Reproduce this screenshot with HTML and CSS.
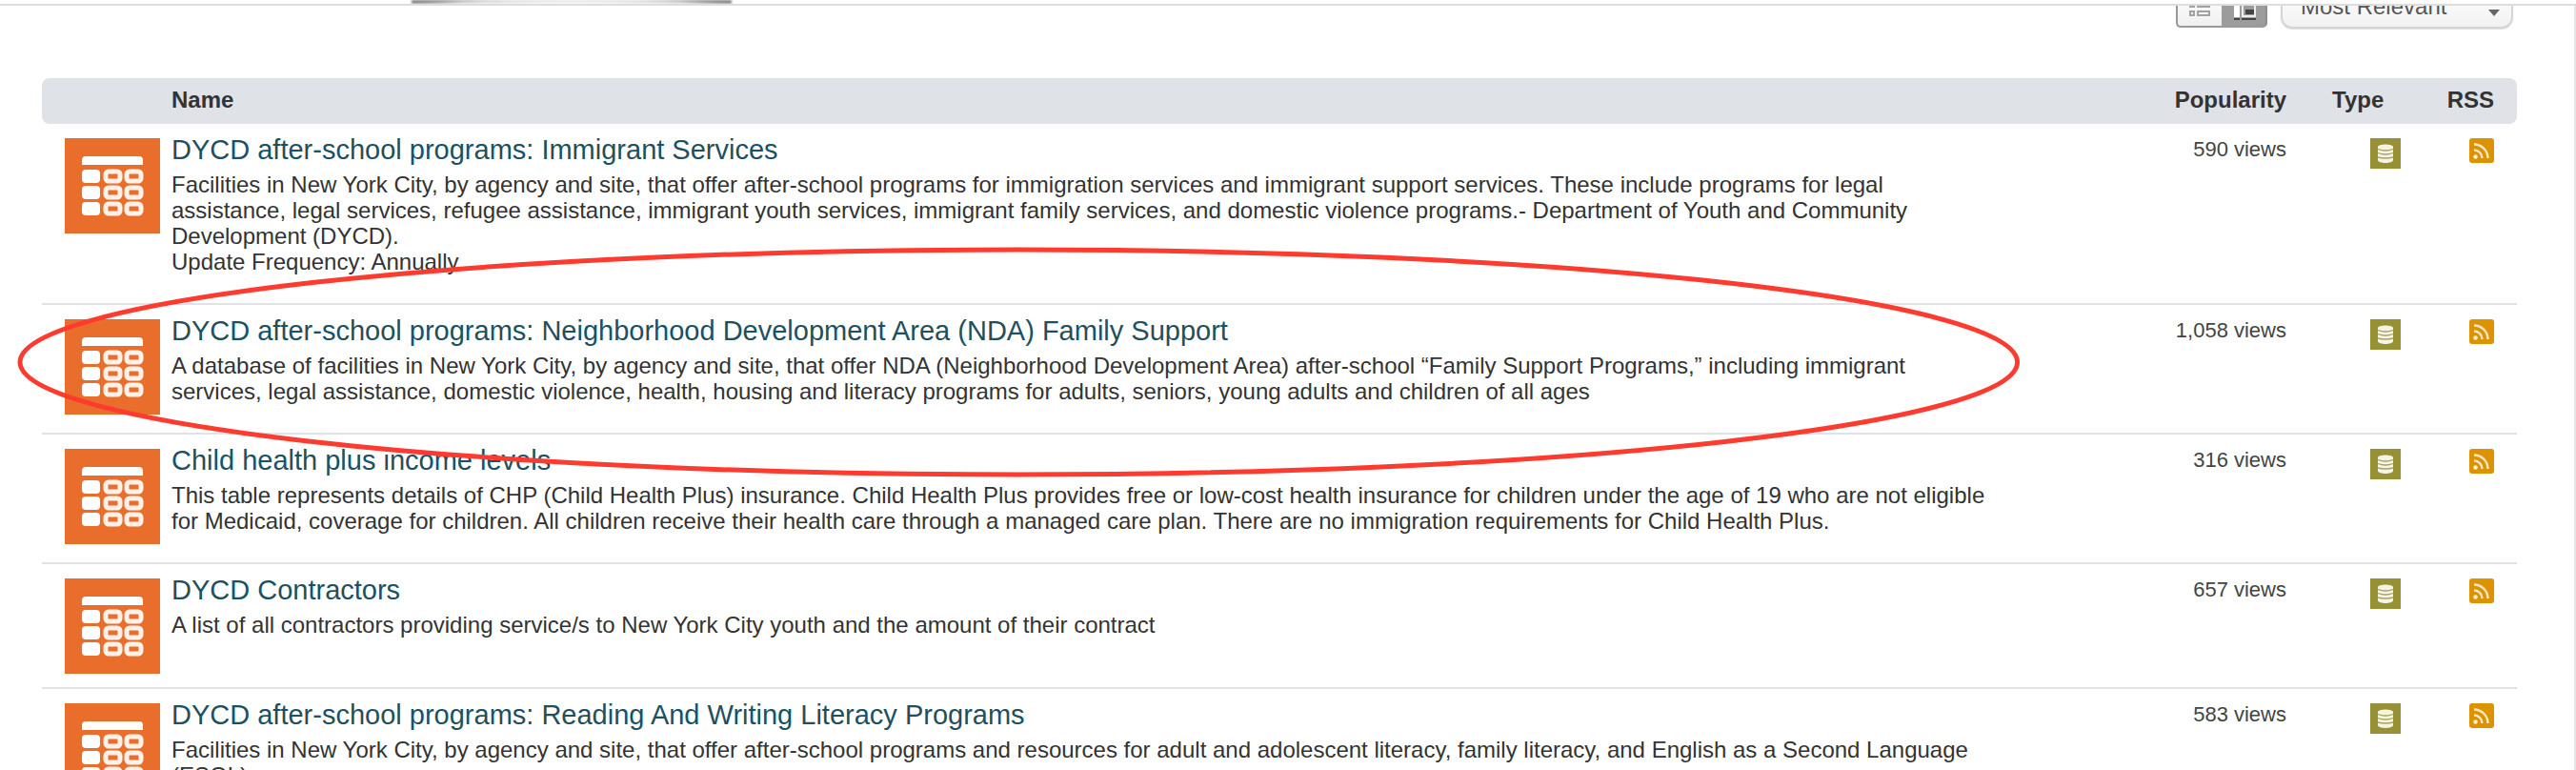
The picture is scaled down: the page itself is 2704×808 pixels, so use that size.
FILE: index.html
```
<!DOCTYPE html>
<html lang="en">
<head>
<meta charset="utf-8">
<title>Search results</title>
<link rel="stylesheet" href="styles.css">
</head>
<body>
<svg class="sprites" aria-hidden="true">
  <symbol id="dataset" viewBox="0 0 100 100">
    <path d="M18 28v-5q0-4 4-4h56q4 0 4 4v5z" fill="#fff"/>
    <g fill="#fff"><rect x="18" y="33" width="19" height="14" rx="4"/><rect x="18" y="50" width="19" height="14" rx="4"/><rect x="18" y="67" width="19" height="14" rx="4"/></g>
    <g fill="none" stroke="#fdf1ea" stroke-width="5"><rect x="43" y="35" width="15" height="10" rx="3"/><rect x="65" y="35" width="15" height="10" rx="3"/><rect x="43" y="52" width="15" height="10" rx="3"/><rect x="65" y="52" width="15" height="10" rx="3"/><rect x="43" y="69" width="15" height="10" rx="3"/><rect x="65" y="69" width="15" height="10" rx="3"/></g>
  </symbol>
  <symbol id="database" viewBox="0 0 32 32">
    <path d="M8 9v14c0 4 16 4 16 0V9z" fill="#f4f3e4"/>
    <ellipse cx="16" cy="9" rx="8" ry="2.5" fill="#f4f3e4"/>
    <path d="M8 11.500q8 3 16 0M8 15.500q8 3 16 0M8 20q8 2 16 0" fill="none" stroke="#a9a55a" stroke-width="1.300"/>
  </symbol>
  <symbol id="feed" viewBox="0 0 26 26">
    <circle cx="6.500" cy="19.500" r="2.200" fill="#fff3dc"/>
    <path d="M5 12.500a8.500 8.500 0 0 1 8.500 8.500M5 6.500a14.500 14.500 0 0 1 14.500 14.500" fill="none" stroke="#fbe9c8" stroke-width="2.400"/>
  </symbol>
</svg>
<header class="masthead"><div class="masthead-shadow"></div></header>
<main class="results">
  <div class="toolbar">
    <div class="views">
      <button class="view" aria-label="List view"><svg viewBox="0 0 48 44"><g fill="none" stroke="#a2a2a2" stroke-width="2"><path d="M15 18h4v4h-4zM23 18h12v4H23zM15 27h4v4h-4zM23 27h12v4H23z"/></g></svg></button>
      <button class="view view-on" aria-label="Detail view"><svg viewBox="0 0 48 44"><path d="M13 12h6v21h-6z" fill="#fff"/><path d="M22 13h13v19H22z" fill="none" stroke="#eee" stroke-width="2"/><path d="M25 25h9v5h-9zM13 34h6v2h-6zM21 34h15v2H21z" fill="#444"/></svg></button>
    </div>
    <div class="sort">
      <select class="sort-select" aria-label="Sort by"><option>Most Relevant</option></select>
      <svg class="sort-arrows" viewBox="0 0 12 20" aria-hidden="true"><path d="M0 8l6-8 6 8zM0 12h12l-6 7z" fill="#666"/></svg>
    </div>
  </div>
  <div class="listing">
    <table class="datasets">
      <thead>
        <tr><th class="thumb"></th><th class="name">Name</th><th class="views-count">Popularity</th><th class="type">Type</th><th class="rss">RSS</th></tr>
      </thead>
      <tbody>
        <tr>
          <td class="thumb"><svg class="dataset-icon"><use href="#dataset"/></svg></td>
          <td class="name"><a class="title" href="#">DYCD after-school programs: Immigrant Services</a><p class="about">Facilities in New York City, by agency and site, that offer after-school programs for immigration services and immigrant support services. These include programs for legal assistance, legal services, refugee assistance, immigrant youth services, immigrant family services, and domestic violence programs.- Department of Youth and Community Development (DYCD).<br>Update Frequency: Annually</p></td>
          <td class="views-count">590 views</td>
          <td class="type"><svg class="type-icon"><use href="#database"/></svg></td>
          <td class="rss"><a class="feed" href="#" aria-label="RSS feed"><svg class="feed-icon"><use href="#feed"/></svg></a></td>
        </tr>
        <tr>
          <td class="thumb"><svg class="dataset-icon"><use href="#dataset"/></svg></td>
          <td class="name"><a class="title" href="#">DYCD after-school programs: Neighborhood Development Area (NDA) Family Support</a><p class="about">A database of facilities in New York City, by agency and site, that offer NDA (Neighborhood Development Area) after-school “Family Support Programs,” including immigrant services, legal assistance, domestic violence, health, housing and literacy programs for adults, seniors, young adults and children of all ages</p></td>
          <td class="views-count">1,058 views</td>
          <td class="type"><svg class="type-icon"><use href="#database"/></svg></td>
          <td class="rss"><a class="feed" href="#" aria-label="RSS feed"><svg class="feed-icon"><use href="#feed"/></svg></a></td>
        </tr>
        <tr>
          <td class="thumb"><svg class="dataset-icon"><use href="#dataset"/></svg></td>
          <td class="name"><a class="title" href="#">Child health plus income levels</a><p class="about">This table represents details of CHP (Child Health Plus) insurance. Child Health Plus provides free or low-cost health insurance for children under the age of 19 who are not eligible for Medicaid, coverage for children. All children receive their health care through a managed care plan. There are no immigration requirements for Child Health Plus.</p></td>
          <td class="views-count">316 views</td>
          <td class="type"><svg class="type-icon"><use href="#database"/></svg></td>
          <td class="rss"><a class="feed" href="#" aria-label="RSS feed"><svg class="feed-icon"><use href="#feed"/></svg></a></td>
        </tr>
        <tr>
          <td class="thumb"><svg class="dataset-icon"><use href="#dataset"/></svg></td>
          <td class="name"><a class="title" href="#">DYCD Contractors</a><p class="about">A list of all contractors providing service/s to New York City youth and the amount of their contract</p></td>
          <td class="views-count">657 views</td>
          <td class="type"><svg class="type-icon"><use href="#database"/></svg></td>
          <td class="rss"><a class="feed" href="#" aria-label="RSS feed"><svg class="feed-icon"><use href="#feed"/></svg></a></td>
        </tr>
        <tr>
          <td class="thumb"><svg class="dataset-icon"><use href="#dataset"/></svg></td>
          <td class="name"><a class="title" href="#">DYCD after-school programs: Reading And Writing Literacy Programs</a><p class="about">Facilities in New York City, by agency and site, that offer after-school programs and resources for adult and adolescent literacy, family literacy, and English as a Second Language (ESOL) programs.</p></td>
          <td class="views-count">583 views</td>
          <td class="type"><svg class="type-icon"><use href="#database"/></svg></td>
          <td class="rss"><a class="feed" href="#" aria-label="RSS feed"><svg class="feed-icon"><use href="#feed"/></svg></a></td>
        </tr>
      </tbody>
    </table>
    <svg class="highlight" viewBox="0 0 100 100" preserveAspectRatio="none" aria-hidden="true"><ellipse cx="50" cy="50" rx="50" ry="50"/></svg>
  </div>
</main>
</body>
</html>
```
FILE: styles.css
```
* { box-sizing: border-box; }
html, body { height: 100%; }
body {
  margin: 0;
  display: flex;
  flex-direction: column;
  overflow: hidden;
  background: #fff;
  color: #333;
  font: 24px/27px "Liberation Sans", Arial, sans-serif;
}
.sprites { display: none; }
.masthead {
  flex: none;
  height: 6px;
  border-bottom: 2px solid #ddd;
  overflow: hidden;
}
.masthead-shadow {
  width: 336px;
  height: 4px;
  margin-left: 432px;
  background: radial-gradient(ellipse 168px 6px at 50% 100%, #fff 0, #ddd 70%, #888 100%);
  filter: blur(1px);
}
.results {
  flex: 1;
  min-height: 0;
  overflow: hidden;
  padding: 0 60px 0 44px;
  border-right: 2px solid #e6e6e6;
}
.toolbar {
  display: flex;
  justify-content: flex-end;
  align-items: flex-end;
  gap: 14px;
  height: 26px;
  padding: 0 4px 2px 0;
  margin-bottom: 50px;
  overflow: hidden;
}
.views { display: flex; flex: none; margin-bottom: 1px; }
.view {
  width: 48px;
  height: 44px;
  padding: 0;
  border: 2px solid #999;
  border-right: 0;
  border-radius: 0 0 0 5px;
  background: linear-gradient(#fff, #f0f0f0);
}
.view svg { display: block; width: 48px; height: 44px; margin: -2px; }
.view-on {
  border-left: 0;
  border-right: 2px solid #8e8e8e;
  border-radius: 0 0 5px 0;
  background: #9c9c9c;
}
.view-on svg { margin-left: 0; }
.sort { position: relative; flex: none; }
.sort-select {
  display: block;
  appearance: none;
  width: 244px;
  height: 46px;
  padding: 0 40px 2px 19px;
  border: 2px solid #d5d5d5;
  border-radius: 12px;
  background: linear-gradient(#fff, #f2f2f2);
  box-shadow: 0 1px 1px #ddd;
  color: #555;
  font: inherit;
}
.sort-arrows { position: absolute; right: 14px; top: 14px; width: 12px; height: 20px; pointer-events: none; }
.listing { position: relative; }
.datasets {
  width: 100%;
  table-layout: fixed;
  border-collapse: separate;
  border-spacing: 0;
}
th {
  height: 48px;
  padding: 0 0 3px;
  background: #dfe2e7;
  text-align: left;
}
th:first-child { border-radius: 8px 0 0 8px; }
th:last-child { border-radius: 0 8px 8px 0; }
td { padding: 15px 0 0; border-bottom: 2px solid #dfe3e8; vertical-align: top; }
.thumb { width: 136px; padding-left: 24px; }
td.thumb { padding-bottom: 14px; }
td.name { padding-right: 182px; padding-bottom: 30px; }
.views-count { width: 126px; text-align: right; }
td.views-count { font-size: 22px; line-height: 23px; color: #444; }
.type { width: 120px; }
th.type { padding-left: 48px; }
td.type { text-align: right; }
.rss { width: 122px; padding-right: 24px; text-align: right; }
.title { display: block; height: 35px; font-size: 29px; line-height: 25px; color: #1d5060; text-decoration: none; }
.about { margin: 0; }
.dataset-icon { display: block; width: 100px; height: 100px; background: #e96e2b; }
.type-icon { display: inline-block; width: 32px; height: 32px; background: #979136; vertical-align: top; }
.feed { display: inline-block; vertical-align: top; }
.feed-icon { display: block; width: 26px; height: 26px; border-radius: 3px; background: #dd9200; }
.highlight {
  position: absolute;
  top: 180px;
  left: -23px;
  width: 80.700%;
  height: 236px;
  overflow: visible;
  pointer-events: none;
}
.highlight ellipse { fill: none; stroke: #ff3b30; stroke-width: 5px; vector-effect: non-scaling-stroke; }
```
